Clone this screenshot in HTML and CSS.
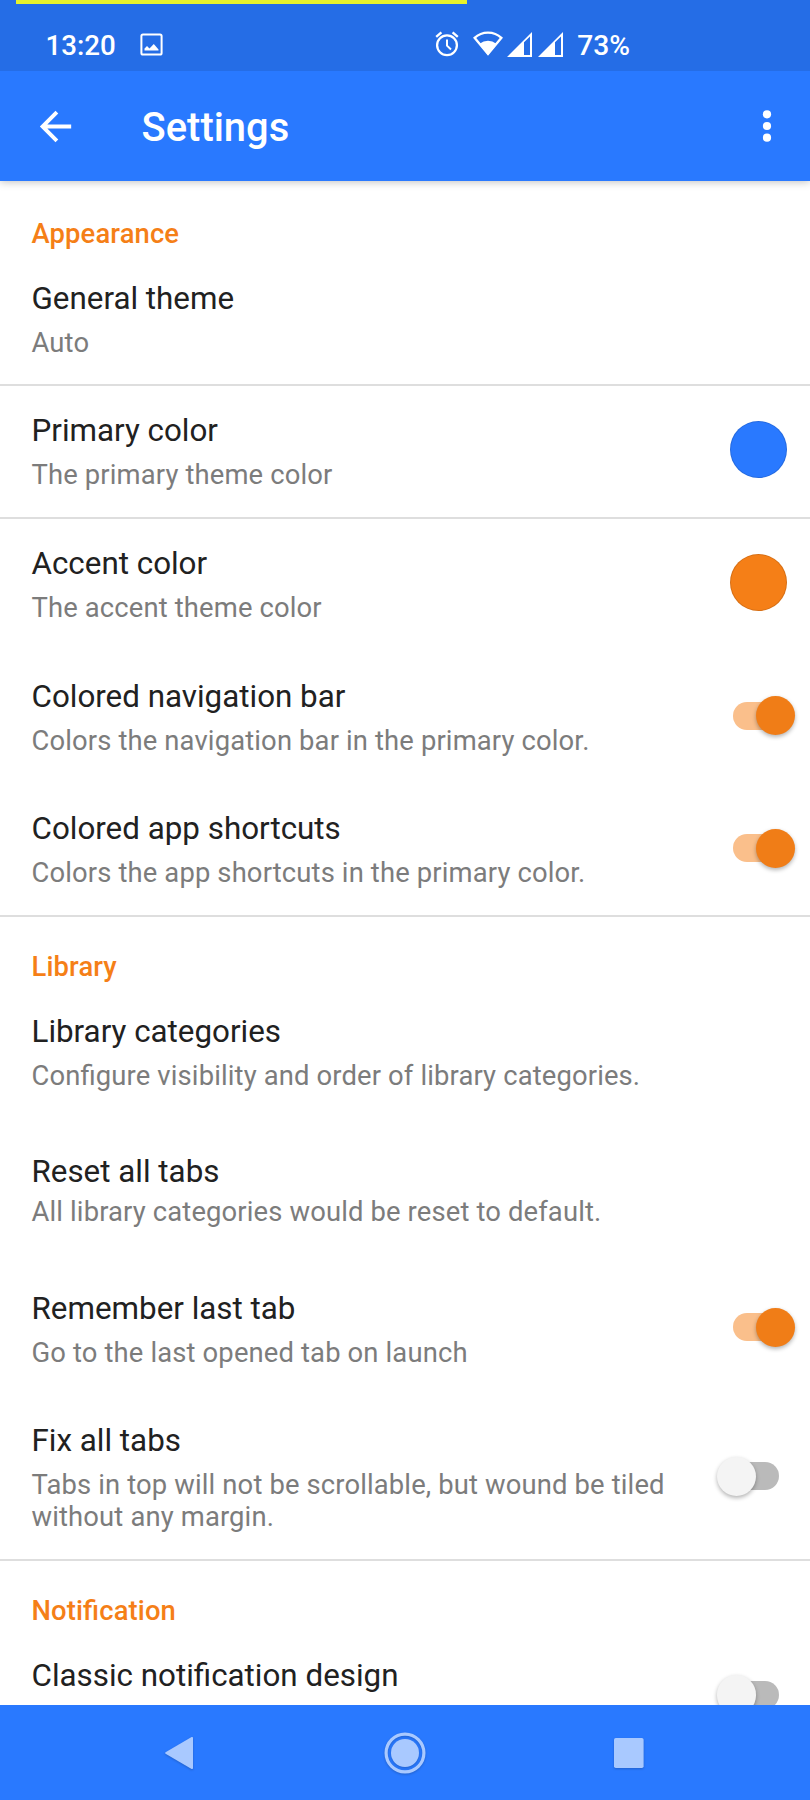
FILE: index.html
```html
<!DOCTYPE html>
<html lang="en">
<head>
<meta charset="utf-8">
<title>Settings</title>
<link rel="stylesheet" href="styles.css">
</head>
<body>
<div class="screen">
  <header class="status-bar">
    <span class="progress"></span>
    <span class="clock">13:20</span>
    <svg class="icon-image" viewBox="0 0 23 23"><rect x="1.4" y="1.4" width="20.2" height="20.2" rx="1.6" fill="none" stroke="#fff" stroke-width="2"/><path d="M4.5 17.5V15.5L7 13L9.5 15.5L13.8 11L18.5 16.5V17.5Z" fill="#fff"/></svg>
    <svg class="icon-alarm" viewBox="0 0 24 26"><circle cx="12" cy="14.2" r="9.9" fill="none" stroke="#fff" stroke-width="2.3"/><path d="M1.2 5.8L6.4 1.4M22.8 5.8L17.6 1.4" stroke="#fff" stroke-width="2.4"/><path d="M12 8.4V14.6L16 18.4" fill="none" stroke="#fff" stroke-width="2"/></svg>
    <svg class="icon-wifi" viewBox="0 0 30 25"><path d="M1.6 6.8C9 -.2 21 -.2 28.4 6.8L15 23Z" fill="none" stroke="#fff" stroke-width="2.3"/><path d="M6.2 13Q15 6.4 23.8 13L15 24Z" fill="#fff"/></svg>
    <svg class="icon-signal" viewBox="0 0 25 25"><path d="M0 25L25 0V25Z M17 10.2V23H23V4.4Z" fill="#fff" fill-rule="evenodd"/></svg>
    <svg class="icon-signal second" viewBox="0 0 25 25"><path d="M0 25L25 0V25Z M17 10.2V23H23V4.4Z" fill="#fff" fill-rule="evenodd"/></svg>
    <span class="battery">73%</span>
  </header>
  <div class="app-bar">
    <svg class="icon-back" viewBox="0 0 24 24"><path fill="#fff" d="M20 11H7.83l5.59-5.59L12 4l-8 8 8 8 1.41-1.41L7.83 13H20v-2z"/></svg>
    <h1 class="page-title">Settings</h1>
    <svg class="icon-more" viewBox="0 0 10 34"><g fill="#fff"><circle cx="5" cy="5.3" r="4.1"/><circle cx="5" cy="17" r="4.1"/><circle cx="5" cy="28.7" r="4.1"/></g></svg>
  </div>
  <main class="list">
    <h2 class="section-title">Appearance</h2>
    <div class="row"><div class="text"><div class="title">General theme</div><div class="summary">Auto</div></div></div>
    <div class="row divided"><div class="text"><div class="title">Primary color</div><div class="summary">The primary theme color</div></div><span class="swatch primary"></span></div>
    <div class="row divided"><div class="text"><div class="title">Accent color</div><div class="summary">The accent theme color</div></div><span class="swatch accent"></span></div>
    <div class="row"><div class="text"><div class="title">Colored navigation bar</div><div class="summary">Colors the navigation bar in the primary color.</div></div><span class="switch on"></span></div>
    <div class="row"><div class="text"><div class="title">Colored app shortcuts</div><div class="summary">Colors the app shortcuts in the primary color.</div></div><span class="switch on"></span></div>
    <h2 class="section-title divided">Library</h2>
    <div class="row"><div class="text"><div class="title">Library categories</div><div class="summary">Configure visibility and order of library categories.</div></div></div>
    <div class="row reset"><div class="text"><div class="title">Reset all tabs</div><div class="summary">All library categories would be reset to default.</div></div></div>
    <div class="row"><div class="text"><div class="title">Remember last tab</div><div class="summary">Go to the last opened tab on launch</div></div><span class="switch on"></span></div>
    <div class="row tall"><div class="text"><div class="title">Fix all tabs</div><div class="summary">Tabs in top will not be scrollable, but wound be tiled without any margin.</div></div><span class="switch"></span></div>
    <h2 class="section-title divided">Notification</h2>
    <div class="row"><div class="text"><div class="title">Classic notification design</div></div><span class="switch"></span></div>
  </main>
  <nav class="nav-bar">
    <svg class="nav-icon" viewBox="0 0 44 44"><path d="M7 20.9L32.6 6.1Q34 5.4 34 7V37Q34 38.6 32.6 37.9L7 23.1Q5.2 22 7 20.9Z" fill="#a9c9ff"/></svg>
    <svg class="nav-icon" viewBox="0 0 44 44"><circle cx="22" cy="22" r="18.9" fill="none" stroke="#a9c9ff" stroke-width="3.2"/><circle cx="22" cy="22" r="14" fill="#a9c9ff"/></svg>
    <svg class="nav-icon" viewBox="0 0 44 44"><rect x="7" y="7" width="29.6" height="30" rx="1.8" fill="#a9c9ff"/></svg>
  </nav>
</div>
</body>
</html>
```
FILE: styles.css
```css
* { box-sizing: border-box; }

body {
  margin: 0;
  background: #fff;
  font-family: Roboto, "Liberation Sans", sans-serif;
}

.screen {
  display: flex;
  flex-direction: column;
  width: 810px;
  height: 1800px;
  overflow: hidden;
}

.status-bar {
  position: relative;
  z-index: 1;
  display: flex;
  flex: 0 0 71px;
  align-items: flex-start;
  padding: 29px 0 0 45.5px;
  background: #256de6;
  color: #fff;
  font-size: 28.2px;
  font-weight: 500;
  line-height: 34px;
}

/* Loading indicator over the top edge */
.progress {
  position: absolute;
  top: 0;
  left: 16px;
  width: 451px;
  height: 4px;
  background: #e6f22b;
}

.status-bar svg { flex: none; }
.clock { width: 94px; font-size: 27.7px; }
.icon-image { width: 23px; height: 23px; margin-top: 4px; }
.icon-alarm { width: 24px; height: 26px; margin: 2px 0 0 272.3px; }
.icon-wifi { width: 30px; height: 25px; margin: 2px 0 0 14px; }
.icon-signal { width: 25px; height: 25px; margin: 3px 0 0 4px; }
.icon-signal.second { margin-left: 6.4px; }
.battery { margin-left: 14px; }

.app-bar {
  position: relative;
  display: flex;
  flex: 0 0 110px;
  align-items: center;
  padding: 0 38px 0 32px;
  background: #2979ff;
  box-shadow: 0 1px 8px rgba(0, 0, 0, .25);
}

.icon-back { width: 47px; height: 47px; }

.page-title {
  flex: 1;
  margin: 4px 0 0 62.6px;
  color: #fff;
  font-size: 39.9px;
  font-weight: 500;
  line-height: 48px;
}

.icon-more { width: 10px; height: 34px; }

.list {
  flex: 1;
  min-height: 0;
  overflow: hidden;
  padding-top: .9px;
  font-feature-settings: "liga" 1;
}

.section-title {
  height: 69.8px;
  margin: 0;
  padding: 36px 31.5px 0;
  color: #f57f17;
  font-size: 27.4px;
  font-weight: 500;
  letter-spacing: .13px;
  line-height: 32px;
}

.row {
  display: flex;
  height: 132.7px;
  padding: 0 16px 0 31.5px;
}

.divided {
  background: linear-gradient(#dedede, #dedede) top / 100% 2px no-repeat;
}

.text { width: 645px; padding-top: 29px; }

.title {
  color: #212121;
  font-size: 31.35px;
  line-height: 36px;
}

.summary {
  margin-top: 10px;
  color: #7c7c7c;
  font-size: 27.4px;
  letter-spacing: .14px;
  line-height: 32px;
}

.reset { height: 144px; }
.reset .text { padding-top: 36.5px; }
.reset .summary { margin-top: 6px; }
.tall { height: 165px; }

.swatch {
  width: 57px;
  height: 57px;
  margin: 37px 7px 0 auto;
  border: 1px solid rgba(0, 0, 0, .12);
  border-radius: 50%;
}

.primary { background-color: #2979ff; }
.accent { background-color: #f57f17; }

.switch {
  position: relative;
  align-self: center;
  width: 46px;
  height: 28px;
  margin: 0 15px 1px auto;
  border-radius: 14px;
  background: #bababa;
}

.switch::after {
  content: "";
  position: absolute;
  top: -5.7px;
  left: -16.3px;
  width: 39.3px;
  height: 39.3px;
  border-radius: 50%;
  background: #f4f4f4;
  box-shadow: 0 2px 4px rgba(0, 0, 0, .3);
}

.switch.on { background: #fabf8b; }
.switch.on::after { left: 22.7px; background: #f07d17; }

.nav-bar {
  display: grid;
  flex: 0 0 94.7px;
  grid-template-columns: repeat(3, 224px);
  place-content: center;
  place-items: center;
  background: #2979ff;
}

.nav-icon { width: 44px; height: 44px; filter: drop-shadow(0 1px 1px rgba(0, 0, 0, .2)); }
```
